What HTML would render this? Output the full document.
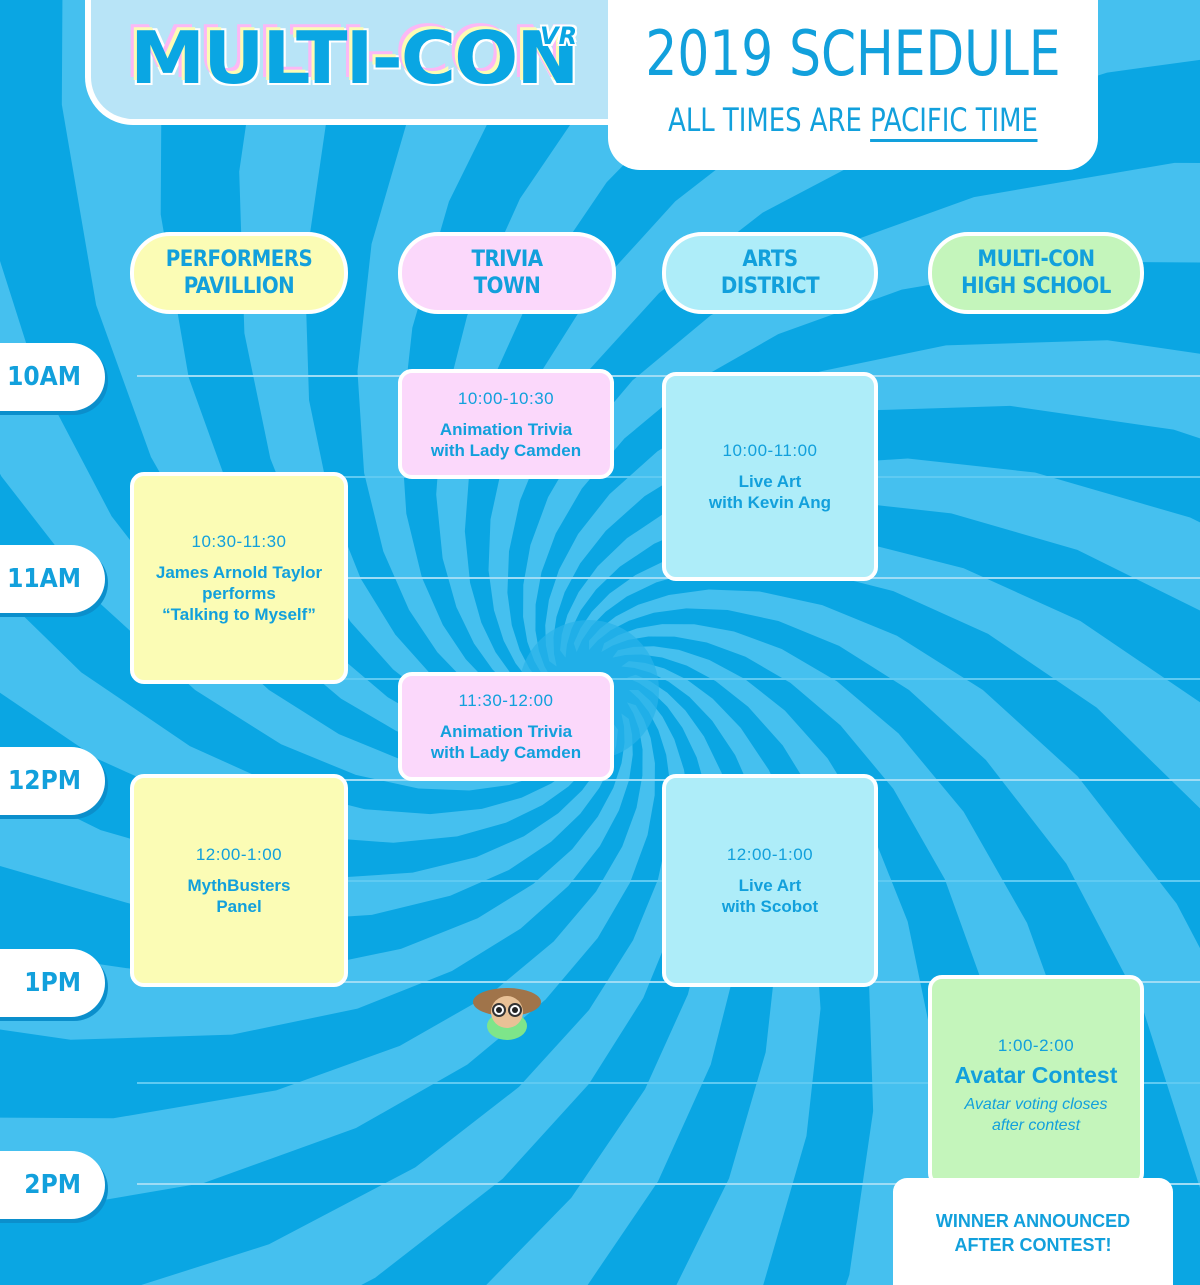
<!DOCTYPE html>
<html><head><meta charset="utf-8"><style>
*{margin:0;padding:0;box-sizing:border-box}
html,body{width:1200px;height:1285px;overflow:hidden}
body{position:relative;font-family:"Liberation Sans",sans-serif;color:#12a0dc;background:#0aa6e3;}
.abs{position:absolute}
.hl{position:absolute;left:137px;right:0;height:2px;background:#9edcf5}
.hl.h{background:#5fcaf2;height:2px}
.pill{position:absolute;border:4px solid #fff;border-radius:40px;display:flex;align-items:center;justify-content:center;text-align:center;font-family:"DejaVu Sans Condensed",sans-serif;font-weight:bold;font-size:22px;line-height:27px;color:#12a0dc;letter-spacing:-.5px}
.t{position:absolute;left:-30px;width:135px;height:68px;background:#fff;border-radius:0 34px 34px 0;box-shadow:3px 4px 0 #0b8fcc;display:flex;align-items:center;justify-content:flex-end;padding-right:24px;font-family:"DejaVu Sans Condensed",sans-serif;font-weight:bold;font-size:26px}
.c{position:absolute;border:4px solid #fff;border-radius:14px;display:flex;flex-direction:column;align-items:center;justify-content:center;text-align:center;font-weight:bold;font-size:17px;line-height:21px}
.c .tm{font-weight:normal;font-size:17px;margin-bottom:10px;letter-spacing:.5px}
.y{background:#fbfcb5}.p{background:#fbd8fb}.b{background:#aeedf9}.g{background:#c4f5bb}
</style></head><body>
<svg class="abs" style="left:0;top:0" width="1200" height="1285">
<defs><polygon id="arm" fill="#45c0ef" points="40,0 49.6,8.75 59.7,21.7 69.3,40 77.2,64.8 81.6,97.3 80,138.6 69,189.4 44.1,250.1 0,320 -70,396.9 -173.7,477.4 -320,554.3 -518.1,617.4 -778.3,653.1 -958.1,804 -637.8,760 -393.9,682.3 -213.8,587.7 -86.2,488.6 0,393.9 54.3,307.9 84.9,233.2 98.5,170.6 100.5,119.8 95,79.8 85.3,49.2 73.5,26.7 61.1,10.8 49.2,0"/></defs>
<g transform="translate(589,690)">
<use href="#arm" transform="rotate(0)"/><use href="#arm" transform="rotate(18)"/><use href="#arm" transform="rotate(36)"/><use href="#arm" transform="rotate(54)"/><use href="#arm" transform="rotate(72)"/>
<use href="#arm" transform="rotate(90)"/><use href="#arm" transform="rotate(108)"/><use href="#arm" transform="rotate(126)"/><use href="#arm" transform="rotate(144)"/><use href="#arm" transform="rotate(162)"/>
<use href="#arm" transform="rotate(180)"/><use href="#arm" transform="rotate(198)"/><use href="#arm" transform="rotate(216)"/><use href="#arm" transform="rotate(234)"/><use href="#arm" transform="rotate(252)"/>
<use href="#arm" transform="rotate(270)"/><use href="#arm" transform="rotate(288)"/><use href="#arm" transform="rotate(306)"/><use href="#arm" transform="rotate(324)"/><use href="#arm" transform="rotate(342)"/>
</g>
<circle cx="589" cy="690" r="70" fill="#2ab4ea" opacity=".7"/>
</svg>

<div class="abs" style="left:85px;top:-10px;width:540px;height:135px;background:#b8e4f7;border:6px solid #fff;border-radius:0 0 0 48px"></div>
<div class="abs" style="left:130px;top:18px;font-family:'DejaVu Sans',sans-serif;font-weight:bold;font-size:72px;line-height:80px;color:#0aa6e3;letter-spacing:-2px;text-shadow:-3px -3px 0 #fbfcb5,-6px -6px 0 #fbb8f5,2px 2px 0 #fff,-2px 2px 0 #fff,2px -2px 0 #fff;transform:scaleX(1.05);transform-origin:left">MULTI-CON</div>
<div class="abs" style="left:540px;top:22px;font-family:'DejaVu Sans',sans-serif;font-weight:bold;font-style:italic;font-size:24px;color:#0aa6e3;text-shadow:2px 2px 0 #fff,-2px -2px 0 #fff,2px -2px 0 #fff,-2px 2px 0 #fff">VR</div>

<div class="abs" style="left:608px;top:-10px;width:490px;height:180px;background:#fff;border-radius:0 0 32px 32px"></div>
<div class="abs" style="left:608px;top:18px;width:490px;text-align:center;font-family:'DejaVu Sans Condensed',sans-serif;font-size:62px;line-height:72px;color:#12a0dc;transform:scaleX(.9)">2019 SCHEDULE</div>
<div class="abs" style="left:608px;top:100px;width:490px;text-align:center;font-family:'DejaVu Sans Condensed',sans-serif;font-size:32px;line-height:40px;color:#12a0dc;transform:scaleX(.9)">ALL TIMES ARE <span style="border-bottom:3px solid #12a0dc">PACIFIC TIME</span></div>

<div class="pill y" style="left:130px;top:232px;width:218px;height:82px">PERFORMERS<br>PAVILLION</div>
<div class="pill p" style="left:398px;top:232px;width:218px;height:82px">TRIVIA<br>TOWN</div>
<div class="pill b" style="left:662px;top:232px;width:216px;height:82px">ARTS<br>DISTRICT</div>
<div class="pill g" style="left:928px;top:232px;width:216px;height:82px">MULTI-CON<br>HIGH SCHOOL</div>

<div class="hl" style="top:375px"></div><div class="hl h" style="top:476px"></div>
<div class="hl" style="top:577px"></div><div class="hl h" style="top:678px"></div>
<div class="hl" style="top:779px"></div><div class="hl h" style="top:880px"></div>
<div class="hl" style="top:981px"></div><div class="hl h" style="top:1082px"></div>
<div class="hl" style="top:1183px"></div>

<div class="t" style="top:343px">10AM</div>
<div class="t" style="top:545px">11AM</div>
<div class="t" style="top:747px">12PM</div>
<div class="t" style="top:949px">1PM</div>
<div class="t" style="top:1151px">2PM</div>

<div class="c p" style="left:398px;top:369px;width:216px;height:110px"><div class="tm">10:00-10:30</div>Animation Trivia<br>with Lady Camden</div>
<div class="c b" style="left:662px;top:372px;width:216px;height:209px"><div class="tm">10:00-11:00</div>Live Art<br>with Kevin Ang</div>
<div class="c y" style="left:130px;top:472px;width:218px;height:212px"><div class="tm">10:30-11:30</div>James Arnold Taylor<br>performs<br>“Talking to Myself”</div>
<div class="c p" style="left:398px;top:672px;width:216px;height:109px"><div class="tm">11:30-12:00</div>Animation Trivia<br>with Lady Camden</div>
<div class="c y" style="left:130px;top:774px;width:218px;height:213px"><div class="tm">12:00-1:00</div>MythBusters<br>Panel</div>
<div class="c b" style="left:662px;top:774px;width:216px;height:213px"><div class="tm">12:00-1:00</div>Live Art<br>with Scobot</div>
<div class="c g" style="left:928px;top:975px;width:216px;height:212px;justify-content:flex-start;padding-top:56px"><div class="tm" style="margin-bottom:4px">1:00-2:00</div><div style="font-size:23px;line-height:30px">Avatar Contest</div><div style="font-weight:normal;font-style:italic;font-size:16px;line-height:21px;margin-top:4px">Avatar voting closes<br>after contest</div></div>
<div class="abs" style="left:893px;top:1178px;width:280px;height:107px;background:#fff;border-radius:14px 14px 0 0;text-align:center;padding-top:31px;font-weight:bold;font-size:18px;line-height:24px">WINNER ANNOUNCED<br>AFTER CONTEST!</div>

<svg class="abs" style="left:468px;top:982px" width="78" height="60" viewBox="0 0 78 60">
<ellipse cx="39" cy="44" rx="20" ry="14" fill="#7ee58a"/>
<ellipse cx="39" cy="20" rx="34" ry="14" fill="#a0744a"/>
<circle cx="39" cy="30" r="16" fill="#e9c196"/>
<circle cx="31" cy="28" r="6" fill="#fff" stroke="#333" stroke-width="2"/>
<circle cx="47" cy="28" r="6" fill="#fff" stroke="#333" stroke-width="2"/>
<circle cx="31" cy="28" r="3" fill="#222"/><circle cx="47" cy="28" r="3" fill="#222"/>
</svg>
</body></html>
